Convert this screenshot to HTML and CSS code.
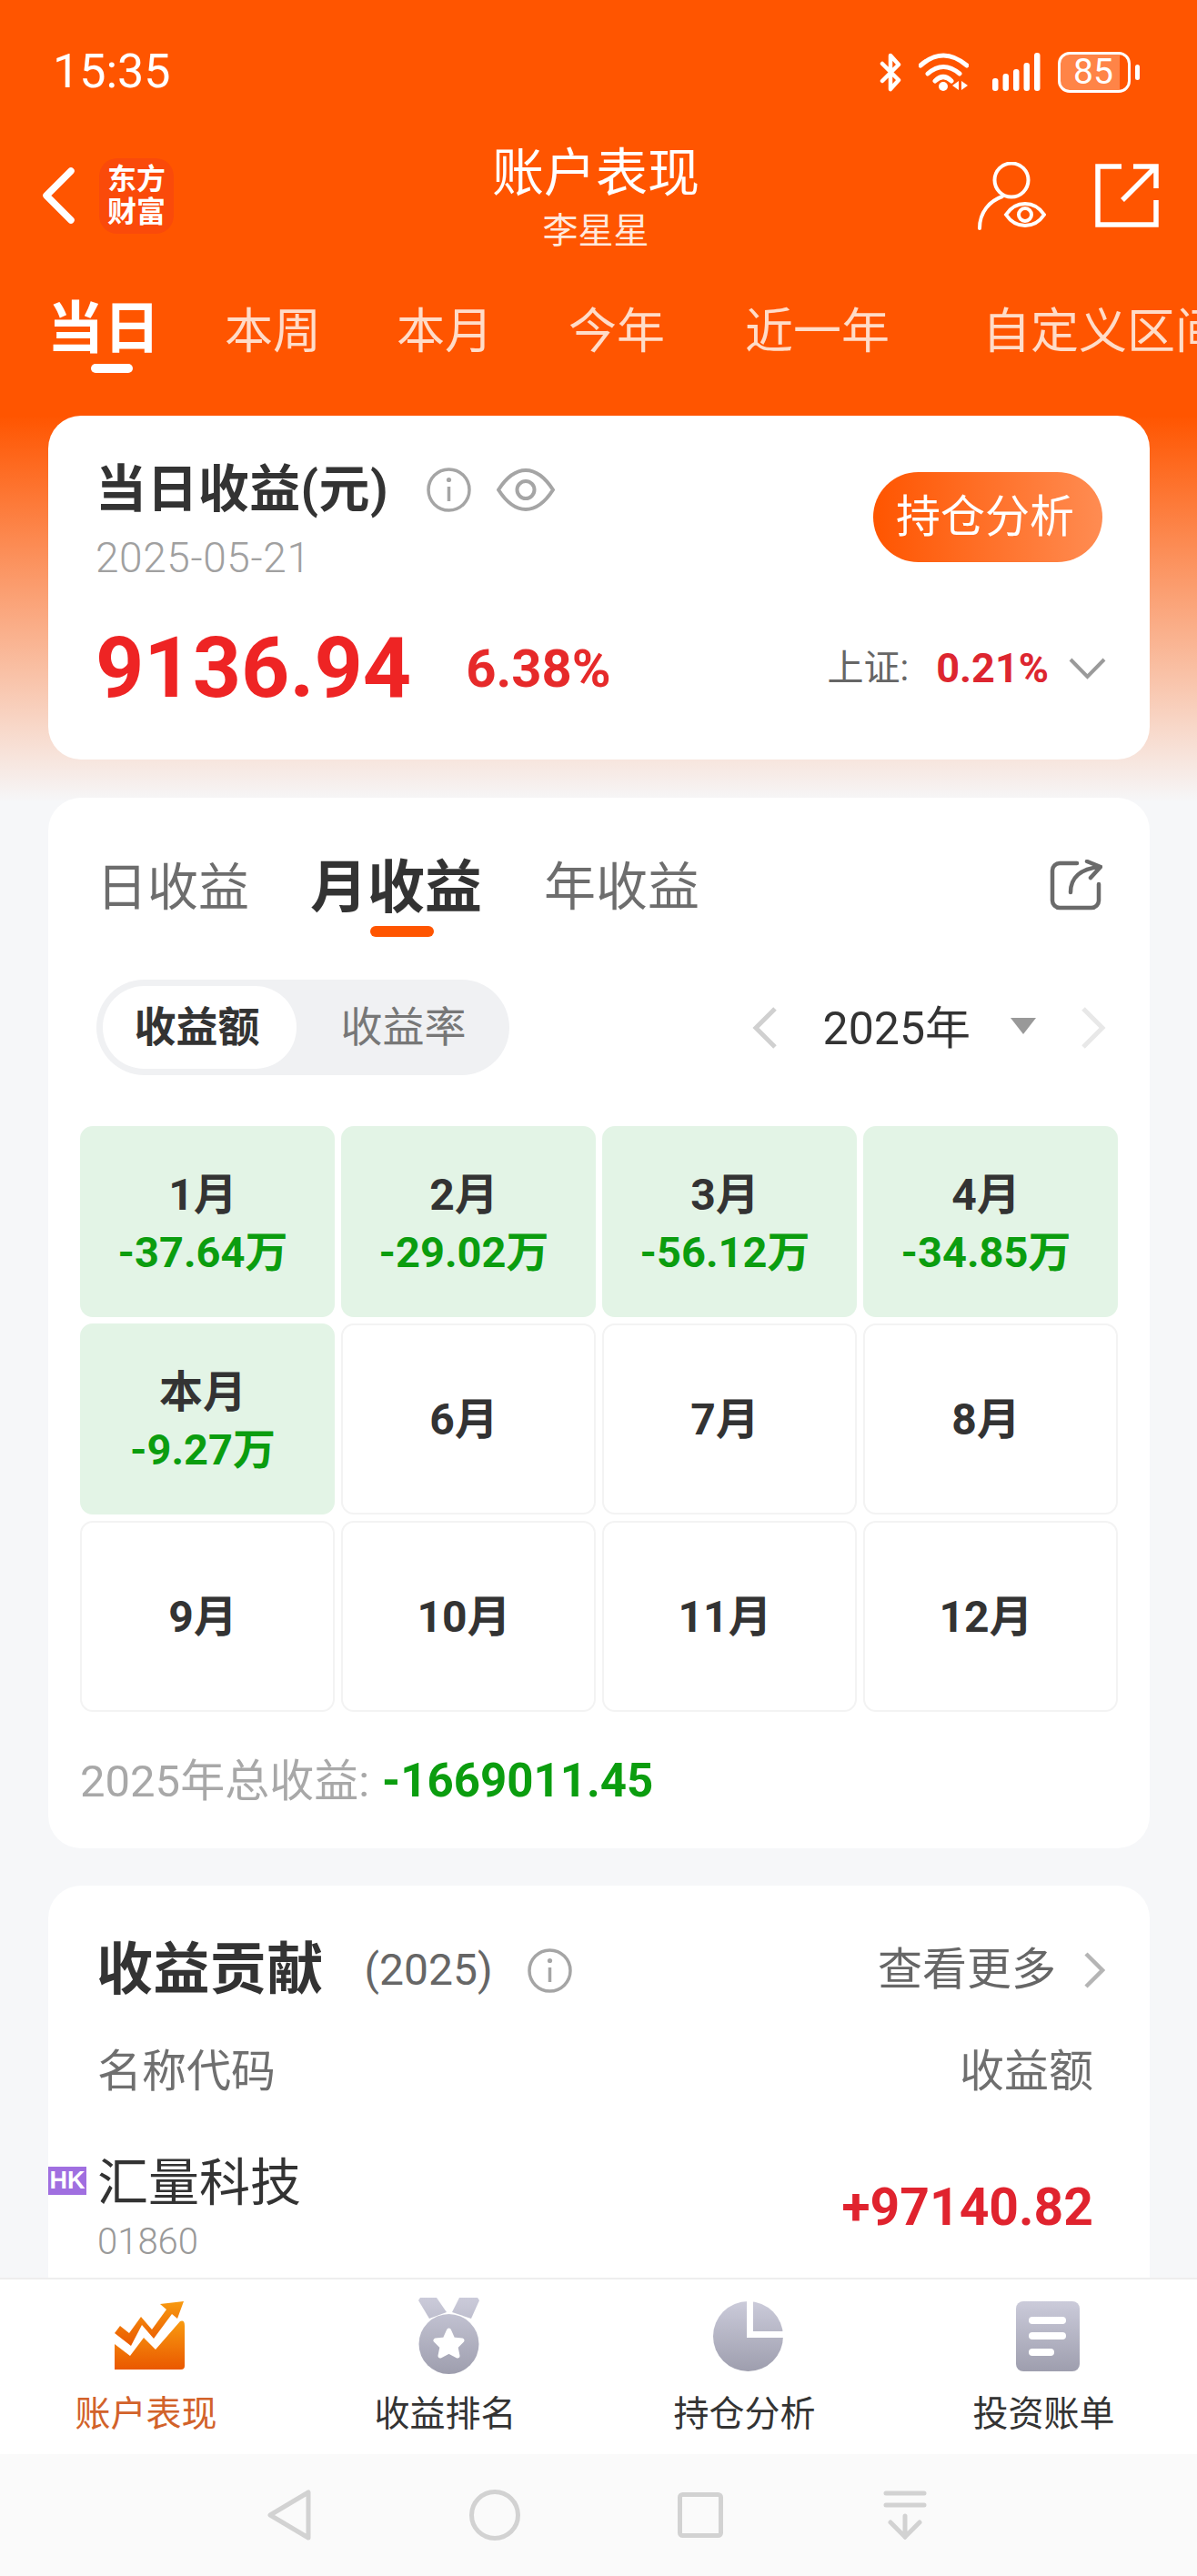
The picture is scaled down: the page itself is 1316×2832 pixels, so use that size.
FILE: index.html
```html
<!DOCTYPE html>
<html lang="zh-CN">
<head>
<meta charset="utf-8">
<title>账户表现</title>
<link rel="stylesheet" href="styles.css">
</head>
<body>
<div class="app">
  <header class="top">
    <div class="status">
      <span class="time">15:35</span>
      <div class="status-icons">
        <svg class="ic-bt" viewBox="0 0 26 43"><path d="M4 12L22 30L13 40V3L22 13L4 31"/></svg>
        <svg class="ic-wifi" viewBox="0 0 55 42"><path d="M2 14Q27 -8 53 14M10 23Q27 8 45 23M18 31Q27 22 36 31"/><circle cx="27" cy="37" r="5"/><polygon points="44,31 37,36 44,41"/><polygon points="47,31 54,36 47,41"/></svg>
        <svg class="ic-signal" viewBox="0 0 53 42"><rect x="0" y="28" width="6.5" height="14" rx="3"/><rect x="11.5" y="23" width="6.5" height="19" rx="3"/><rect x="23" y="18" width="6.5" height="24" rx="3"/><rect x="34.5" y="11" width="6.5" height="31" rx="3"/><rect x="46" y="0" width="6.5" height="42" rx="3"/></svg>
        <div class="battery"><span class="battery-body">85</span><span class="battery-nub"></span></div>
      </div>
    </div>
    <div class="appbar">
      <div class="appbar-left">
        <svg class="ic-back" viewBox="0 0 38 66"><path d="M32 6L5 33L32 60"/></svg>
        <div class="logo"><span>东方</span><span>财富</span></div>
      </div>
      <div class="title-block">
        <div class="title">账户表现</div>
        <div class="subtitle">李星星</div>
      </div>
      <div class="appbar-right">
        <svg class="ic-person" viewBox="0 0 76 75"><circle cx="38" cy="20" r="18.5"/><path d="M3 73C3 55 14 43 28 38"/><path d="M32 58C38 49 45 46 53 46C61 46 68 49 74 58C68 67 61 70 53 70C45 70 38 67 32 58Z"/><circle cx="53" cy="58" r="7"/></svg>
        <svg class="ic-share" viewBox="0 0 70 70"><path d="M29 3H3V67H67V40M42 3H67V27M66 4L30 40"/></svg>
      </div>
    </div>
    <nav class="periods">
      <div class="period period-on">当日<span class="period-bar"></span></div>
      <div class="period">本周</div>
      <div class="period">本月</div>
      <div class="period">今年</div>
      <div class="period period-wide">近一年</div>
      <div class="period period-last">自定义区间</div>
    </nav>
  </header>

  <main class="main">
    <section class="card summary">
      <div class="summary-top">
        <div class="summary-head">
          <div class="summary-title">
            <span class="summary-name">当日收益(元)</span>
            <svg class="ic-info" viewBox="0 0 49 49"><circle cx="24.5" cy="24.5" r="22.5"/><path d="M24.5 21V37"/><circle class="dot" cx="24.5" cy="13.5" r="2.6"/></svg>
            <svg class="ic-eye" viewBox="0 0 64 47"><path d="M2 23.5C12 8 22 2 32 2C42 2 52 8 62 23.5C52 39 42 45 32 45C22 45 12 39 2 23.5Z"/><circle cx="32" cy="23.5" r="9.5"/></svg>
          </div>
          <div class="summary-date">2025-05-21</div>
        </div>
        <div class="btn-analysis">持仓分析</div>
      </div>
      <div class="summary-bottom">
        <span class="amount">9136.94</span>
        <span class="rate">6.38%</span>
        <div class="index">
          <span class="index-name">上证:</span>
          <span class="index-val">0.21%</span>
          <svg class="ic-down" viewBox="0 0 41 24"><path d="M2 2L20.5 21L39 2"/></svg>
        </div>
      </div>
    </section>

    <section class="card monthly">
      <div class="m-tabs">
        <div class="m-tab">日收益</div>
        <div class="m-tab m-tab-on">月收益<span class="m-tab-bar"></span></div>
        <div class="m-tab m-tab-last">年收益</div>
        <svg class="ic-export" viewBox="0 0 58 56"><path d="M30 4H11A8 8 0 0 0 3 12V45A8 8 0 0 0 11 53H46A8 8 0 0 0 54 45V27"/><path d="M23 36C23 20 34 10 55 8M41 2L56 8L45 20"/></svg>
      </div>
      <div class="m-controls">
        <div class="toggle">
          <span class="toggle-item toggle-on">收益额</span>
          <span class="toggle-item">收益率</span>
        </div>
        <div class="year">
          <svg class="ic-prev" viewBox="0 0 28 46"><path d="M25 2L4 23L25 44"/></svg>
          <span class="year-text">2025年</span>
          <span class="year-caret"></span>
          <svg class="ic-next" viewBox="0 0 28 46"><path d="M3 2L24 23L3 44"/></svg>
        </div>
      </div>
      <div class="months">
        <div class="month month-loss"><span class="m-name">1月</span><span class="m-val">-37.64万</span></div>
        <div class="month month-loss"><span class="m-name">2月</span><span class="m-val">-29.02万</span></div>
        <div class="month month-loss"><span class="m-name">3月</span><span class="m-val">-56.12万</span></div>
        <div class="month month-loss"><span class="m-name">4月</span><span class="m-val">-34.85万</span></div>
        <div class="month month-loss"><span class="m-name">本月</span><span class="m-val">-9.27万</span></div>
        <div class="month"><span class="m-name">6月</span></div>
        <div class="month"><span class="m-name">7月</span></div>
        <div class="month"><span class="m-name">8月</span></div>
        <div class="month"><span class="m-name">9月</span></div>
        <div class="month"><span class="m-name">10月</span></div>
        <div class="month"><span class="m-name">11月</span></div>
        <div class="month"><span class="m-name">12月</span></div>
      </div>
      <div class="total"><span class="total-label">2025年总收益:</span><span class="total-val">-1669011.45</span></div>
    </section>

    <section class="card contrib">
      <div class="c-head">
        <span class="c-title">收益贡献</span>
        <span class="c-year">(2025)</span>
        <svg class="ic-info" viewBox="0 0 49 49"><circle cx="24.5" cy="24.5" r="22.5"/><path d="M24.5 21V37"/><circle class="dot" cx="24.5" cy="13.5" r="2.6"/></svg>
        <span class="c-more">查看更多</span>
        <svg class="ic-more" viewBox="0 0 24 40"><path d="M3 2L21 20L3 38"/></svg>
      </div>
      <div class="c-cols"><span>名称代码</span><span>收益额</span></div>
      <div class="c-row">
        <span class="tag-hk">HK</span>
        <div class="c-stock">
          <div class="c-name">汇量科技</div>
          <div class="c-code">01860</div>
        </div>
        <span class="c-val">+97140.82</span>
      </div>
    </section>
  </main>

  <nav class="tabbar">
    <div class="tab tab-on">
      <svg class="t-trend" viewBox="0 0 77 75"><defs><linearGradient id="go" x1="0" y1="0" x2="0" y2="1"><stop offset="0" stop-color="#f89a10"/><stop offset="1" stop-color="#ea5800"/></linearGradient></defs><path fill="url(#go)" stroke="none" d="M0 75V47L17 60L32 40L45 53L72 22Q77 20 77 27V71Q77 75 73 75Z"/><path fill="url(#go)" stroke="none" d="M50 3L76 0L69 19L63 14L43 41L30 26L18 49L0 35L6 27L16 35L29 17L41 31L57 9Z"/></svg>
      <span class="t-label">账户表现</span>
    </div>
    <div class="tab">
      <svg class="t-medal" viewBox="0 0 67 84"><defs><linearGradient id="gm" gradientUnits="userSpaceOnUse" x1="0" y1="0" x2="0" y2="84"><stop offset="0" stop-color="#cbcbda"/><stop offset="1" stop-color="#9e9eae"/></linearGradient></defs><polygon fill="url(#gm)" points="2,0 20,0 31,16 12,23 0,3"/><polygon fill="url(#gm)" points="65,0 45,0 37,16 58,23 67,3"/><circle fill="url(#gm)" cx="33.5" cy="51" r="33"/><polygon fill="#fff" stroke="#fff" stroke-width="5" stroke-linejoin="round" points="33.5,36 38,46 48,47 41,54 43,64 33.5,59 24,64 26,54 19,47 29,46"/></svg>
      <span class="t-label">收益排名</span>
    </div>
    <div class="tab">
      <svg class="t-pie" viewBox="0 0 77 77"><defs><linearGradient id="gp" x1="0" y1="0" x2="0" y2="1"><stop offset="0" stop-color="#cbcbda"/><stop offset="1" stop-color="#9e9eae"/></linearGradient></defs><circle fill="url(#gp)" cx="38.5" cy="38.5" r="38.5"/><rect fill="#fff" x="37" y="0" width="7" height="40"/><rect fill="#fff" x="37" y="33" width="40" height="7"/></svg>
      <span class="t-label">持仓分析</span>
    </div>
    <div class="tab">
      <svg class="t-doc" viewBox="0 0 70 77"><defs><linearGradient id="gd" x1="0" y1="0" x2="0" y2="1"><stop offset="0" stop-color="#cbcbda"/><stop offset="1" stop-color="#9e9eae"/></linearGradient></defs><rect fill="url(#gd)" width="70" height="77" rx="8"/><rect fill="#fff" x="14" y="17" width="41" height="8" rx="4"/><rect fill="#fff" x="14" y="34" width="41" height="8" rx="4"/><rect fill="#fff" x="14" y="52" width="28" height="8" rx="4"/></svg>
      <span class="t-label">投资账单</span>
    </div>
  </nav>

  <div class="sysnav">
    <div class="sys-item"><svg class="s-back" viewBox="0 0 48 56"><path d="M45 3V53L3 28Z"/></svg></div>
    <div class="sys-item"><svg class="s-home" viewBox="0 0 56 56"><circle cx="28" cy="28" r="25.5"/></svg></div>
    <div class="sys-item"><svg class="s-recent" viewBox="0 0 50 50"><rect x="2.5" y="2.5" width="45" height="45" rx="3"/></svg></div>
    <div class="sys-item"><svg class="s-drop" viewBox="0 0 48 54"><path d="M3 3H45M3 16H45M24 28V51M8 35L24 51L40 35"/></svg></div>
  </div>
</div>
</body>
</html>
```
FILE: styles.css
```css
* { box-sizing: border-box; }
html, body { margin: 0; padding: 0; }
body { font-family: Roboto, "Noto Sans CJK SC", sans-serif; color: #333; }
svg { display: block; flex: none; fill: none; }

.app { width: 1316px; height: 2832px; display: flex; flex-direction: column; overflow: hidden; background: #f6f7f9; }

/* top */
.top { height: 457px; flex: none; background: #ff5500; color: #fff; }
.status { height: 158px; display: flex; align-items: center; justify-content: space-between; padding: 0 63px 0 58px; }
.time { font-size: 52px; font-weight: 400; line-height: 60px; }
.status-icons { display: flex; align-items: center; }
.ic-bt { width: 26px; height: 43px; stroke: #fff; stroke-width: 4.5; stroke-linejoin: round; stroke-linecap: round; }
.ic-wifi { width: 55px; height: 42px; margin-left: 18px; stroke: #fff; stroke-width: 5; stroke-linecap: round; }
.ic-wifi circle, .ic-wifi polygon { fill: #fff; stroke: none; }
.ic-signal { width: 53px; height: 42px; margin-left: 26px; fill: #fff; }
.battery { display: flex; align-items: center; margin-left: 19px; }
.battery-body { width: 80px; height: 45px; border: 3.5px solid #fff; border-radius: 13px; font-size: 39px; line-height: 38px; text-align: center; padding-right: 2px; background: linear-gradient(to right, rgba(255,255,255,.28) 88%, transparent 88%); }
.battery-nub { width: 5px; height: 17px; background: #fff; border-radius: 3px; margin-left: 5px; }

.appbar { height: 118px; display: grid; grid-template-columns: 1fr auto 1fr; align-items: center; padding: 0 42px 0 46px; }
.appbar-left { display: flex; align-items: center; margin-top: -5px; }
.ic-back { width: 38px; height: 66px; stroke: #fff; stroke-width: 7.5; stroke-linecap: round; stroke-linejoin: round; }
.logo { width: 82px; height: 83px; margin-left: 25px; background: #fa4a0a; border-radius: 20px; display: flex; flex-direction: column; align-items: center; justify-content: center; font-size: 32px; line-height: 36px; font-weight: 700; }
.title-block { text-align: center; margin-right: 10px; }
.title { font-size: 57px; line-height: 62px; margin-top: 2px; }
.subtitle { font-size: 39px; line-height: 46px; margin-top: 9px; color: #ffe9dd; }
.appbar-right { display: flex; justify-content: flex-end; align-items: center; margin-top: -5px; }
.ic-person { width: 76px; height: 75px; stroke: #fff; stroke-width: 4; stroke-linecap: round; }
.ic-share { width: 70px; height: 70px; margin-left: 54px; stroke: #fff; stroke-width: 5.5; stroke-linecap: butt; }

.periods { display: flex; align-items: baseline; padding: 51px 0 0 52px; white-space: nowrap; overflow: hidden; height: 181px; }
.period { font-size: 53px; line-height: 70px; margin-left: 83px; color: #ffdcc8; flex: none; }
.period-on { margin-left: 0; display: flex; flex-direction: column; font-size: 62px; font-weight: 700; color: #fff; margin-right: -12px; }
.period-bar { display: block; width: 46px; height: 10px; border-radius: 5px; background: #fff; margin: 3px 0 0 48px; }
.period-wide { margin-left: 88px; }
.period-last { margin-left: 102px; }

/* main */
.main { flex: 1; min-height: 0; overflow: hidden; padding: 0 52px 0 53px; background: linear-gradient(#ff5500 0, #f6f7f9 425px); }
.card { background: #fff; border-radius: 36px; }

.summary { height: 378px; padding: 53px 52px 0 52px; }
.summary-top { display: flex; justify-content: space-between; align-items: flex-start; }
.summary-title { display: flex; align-items: center; height: 56px; }
.summary-name { font-size: 56px; line-height: 56px; font-weight: 700; letter-spacing: .4px; }
.ic-info { width: 49px; height: 49px; stroke: #a5a5a5; stroke-width: 3.5; }
.ic-info .dot { fill: #a5a5a5; stroke: none; }
.summary-title .ic-info { margin-left: 42px; }
.ic-eye { width: 64px; height: 47px; margin-left: 28px; stroke: #a5a5a5; stroke-width: 4; }
.summary-date { font-size: 46px; line-height: 48px; margin-top: 23px; letter-spacing: .6px; color: #a0a0a0; font-weight: 300; }
.btn-analysis { width: 252px; height: 99px; margin-top: 9px; padding-right: 6px; border-radius: 50px; background: linear-gradient(to right, #ff5500, #ff8c52); color: #fff; font-size: 49px; line-height: 99px; text-align: center; }

.summary-bottom { display: flex; align-items: center; height: 100px; margin-top: 48px; }
.amount { font-size: 93px; line-height: 100px; font-weight: 700; color: #ee2424; }
.rate { font-size: 58px; line-height: 100px; font-weight: 700; color: #e62a2a; margin-left: 60px; }
.index { margin-left: auto; display: flex; align-items: center; margin-right: -4px; }
.index-name { font-size: 40px; line-height: 50px; color: #666; }
.index-val { font-size: 45px; line-height: 50px; font-weight: 700; color: #dd2630; margin-left: 30px; }
.ic-down { width: 41px; height: 24px; margin-left: 22px; stroke: #9a9a9a; stroke-width: 4; }

.monthly { height: 1155px; margin-top: 42px; padding: 69px 35px 0; }
.m-tabs { display: flex; align-items: center; height: 60px; padding: 0 17px 0 18px; }
.m-tab { font-size: 56px; line-height: 60px; color: #6d6d6d; margin-right: 67px; flex: none; }
.m-tab-on { position: relative; font-size: 63px; font-weight: 700; color: #333; margin-right: 68px; }
.m-tab-last { margin-right: auto; font-size: 57px; }
.m-tab-bar { position: absolute; left: 66px; top: 72px; width: 70px; height: 12px; border-radius: 6px; background: #ff5500; }
.ic-export { width: 58px; height: 56px; margin-top: -6px; stroke: #6a6a6a; stroke-width: 4.5; stroke-linecap: round; stroke-linejoin: round; }

.m-controls { display: flex; align-items: center; justify-content: space-between; margin-top: 71px; padding: 0 13px 0 18px; }
.toggle { width: 454px; height: 105px; border-radius: 53px; background: #f0f1f3; display: flex; align-items: center; padding: 0 7px; }
.toggle-item { width: 214px; height: 91px; line-height: 91px; text-align: center; font-size: 46px; color: #777; padding-right: 6px; }
.toggle-on { background: #fff; border-radius: 46px; font-weight: 700; color: #333; }
.toggle-on + .toggle-item { margin-left: 14px; }
.year { display: flex; align-items: center; }
.ic-prev { width: 28px; height: 46px; stroke: #d0d0d0; stroke-width: 5; }
.ic-next { width: 28px; height: 46px; margin-left: 49px; stroke: #e8e8e8; stroke-width: 5; }
.year-text { font-size: 50px; line-height: 60px; margin-left: 50px; margin-top: 2px; color: #333; }
.year-caret { width: 0; height: 0; border-left: 14px solid transparent; border-right: 14px solid transparent; border-top: 18px solid #999; margin-left: 44px; margin-top: -4px; }

.months { display: grid; grid-template-columns: repeat(4, 280px); grid-auto-rows: 210px; gap: 7px; margin-top: 56px; }
.month { border: 2px solid #f3f3f3; border-radius: 14px; display: flex; flex-direction: column; align-items: center; justify-content: center; padding: 2px 10px 0 0; }
.month-loss { background: #e3f4e6; border-color: #e3f4e6; }
.m-name { font-size: 48px; line-height: 60px; font-weight: 700; color: #333; }
.m-val { font-size: 47px; line-height: 56px; font-weight: 700; color: #0b9d0f; margin-top: 5px; }

.total { margin-top: 46px; line-height: 60px; }
.total-label { font-size: 49px; color: #a8a8a8; }
.total-val { font-size: 51px; font-weight: 700; color: #0b9d0f; margin-left: 14px; }

.contrib { margin-top: 41px; height: 600px; padding: 63px 49px 0 0; border-radius: 36px 36px 0 0; }
.c-head { display: flex; align-items: center; height: 60px; padding-left: 53px; }
.c-title { font-size: 62px; line-height: 60px; font-weight: 700; letter-spacing: .4px; }
.c-year { font-size: 48px; line-height: 60px; color: #666; margin-left: 45px; }
.contrib .ic-info { margin-left: 38px; }
.c-more { font-size: 49px; line-height: 60px; color: #666; margin-left: auto; }
.ic-more { width: 24px; height: 40px; margin-left: 30px; stroke: #b5b5b5; stroke-width: 4.5; }
.c-cols { display: flex; justify-content: space-between; margin-top: 57px; padding: 0 13px 0 54px; font-size: 49px; line-height: 50px; color: #6f6f6f; }
.c-row { display: flex; align-items: flex-start; margin-top: 67px; padding-right: 13px; }
.tag-hk { width: 42px; height: 31px; margin-top: 12px; background: #a06fe0; color: #fff; font-size: 27px; line-height: 31px; text-align: center; font-weight: 700; font-family: "Liberation Sans", sans-serif; }
.c-stock { margin-left: 12px; }
.c-name { font-size: 56px; line-height: 60px; color: #333; }
.c-code { font-size: 40px; line-height: 44px; margin-top: 13px; color: #999; font-weight: 300; }
.c-val { margin-left: auto; font-size: 57px; line-height: 60px; font-weight: 700; color: #e0232e; margin-top: 27px; }

/* tabbar */
.tabbar { height: 194px; flex: none; background: #fff; border-top: 2px solid #eee; display: flex; padding-top: 20px; }
.tab { flex: 1; display: flex; flex-direction: column; align-items: center; padding-right: 8px; }
.t-trend { width: 77px; height: 75px; margin-top: 4px; margin-bottom: 27px; margin-left: 8px; }
.t-medal { width: 67px; height: 84px; margin-bottom: 22px; margin-left: 8px; }
.t-pie { width: 77px; height: 77px; margin-top: 4px; margin-bottom: 25px; margin-left: 8px; }
.t-doc { width: 70px; height: 77px; margin-top: 4px; margin-bottom: 25px; margin-left: 8px; }
.t-label { font-size: 39px; line-height: 44px; color: #333; }
.tab-on .t-label { color: #d2622a; }

/* system nav */
.sysnav { height: 134px; flex: none; background: #fafafa; display: flex; justify-content: center; align-items: center; padding-right: 2px; }
.sys-item { width: 226px; display: flex; justify-content: center; }
.s-back { width: 48px; height: 56px; stroke: #d2d2d2; stroke-width: 5; stroke-linejoin: round; }
.s-home { width: 56px; height: 56px; stroke: #d2d2d2; stroke-width: 5; }
.s-recent { width: 50px; height: 50px; stroke: #d2d2d2; stroke-width: 5; }
.s-drop { width: 48px; height: 54px; margin-right: 3px; stroke: #d2d2d2; stroke-width: 5; stroke-linecap: round; }
```
